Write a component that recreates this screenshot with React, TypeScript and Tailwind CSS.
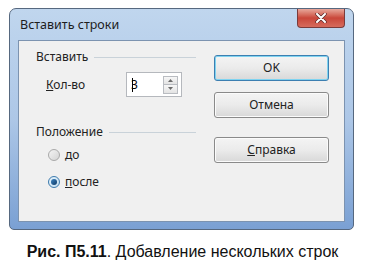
import React from "react";

const font = { fontFamily: '"Noto Sans", "Open Sans", sans-serif' };

const Radio = ({ checked }: { checked?: boolean }) => (
  <span
    className={
      "flex h-[12px] w-[12px] items-center justify-center rounded-full border " +
      (checked
        ? "border-[#3d7bad] bg-gradient-to-br from-[#e6f3fb] to-[#c4dff2]"
        : "border-[#a9a9a9] bg-gradient-to-br from-[#f4f4f4] to-[#d4d4d4]")
    }
  >
    {checked && (
      <span className="h-[6px] w-[6px] rounded-full bg-gradient-to-br from-[#3f86c3] to-[#0e3a66]" />
    )}
  </span>
);

const Button = ({
  children,
  primary,
}: {
  children: React.ReactNode;
  primary?: boolean;
}) => (
  <div
    className={
      "flex h-[26px] w-[115px] items-center justify-center rounded-[3px] border bg-gradient-to-b from-[#f4f4f4] via-[#ebebeb] to-[#d8d8d8] text-[12px] text-[#222] " +
      (primary
        ? "border-[#3c7fb1] shadow-[inset_0_0_0_1px_#7fd3f0]"
        : "border-[#8a8a8a] shadow-[inset_0_0_0_1px_#fbfbfb]")
    }
  >
    {children}
  </div>
);

const Header = ({ label }: { label: string }) => (
  <div className="flex h-[16px] items-center">
    <span className="text-[12px] text-[#222]">{label}</span>
    <span className="ml-[6px] h-px flex-1 bg-[#c9d2d9]" />
  </div>
);

export default function App() {
  return (
    <div className="h-[270px] w-[365px] overflow-hidden bg-white" style={font}>
      <div className="ml-[9px] mt-[8px] flex h-[222px] w-[345px] flex-col rounded-t-[7px] rounded-b-[5px] border border-[#56687f] bg-gradient-to-b from-[#c0d6ee] via-[#adc7e7] to-[#7aa0d3]">
        <div className="flex h-[31px] items-start justify-between pl-[10px] pr-[8px]">
          <span className="mt-[7px] text-[12.5px] text-[#1d1d1d]">Вставить строки</span>
          <div className="flex h-[19px] w-[48px] items-center justify-center rounded-b-[4px] border border-t-0 border-[#7a3b3b] bg-gradient-to-b from-[#e6a79c] via-[#c9463a] to-[#d66b5d]">
            <svg width="12" height="10" viewBox="0 0 12 10">
              <path d="M2 1 L10 9 M10 1 L2 9" stroke="#5a2a2a" strokeWidth="3.4" strokeLinecap="round" />
              <path d="M2 1 L10 9 M10 1 L2 9" stroke="#fff" strokeWidth="2" strokeLinecap="round" />
            </svg>
          </div>
        </div>
        <div className="mx-[8px] mb-[7px] flex flex-1 border border-[#7c93b0] bg-[#f0f0f0]">
          <div className="w-[177px] pl-[17px] pt-[8px]">
            <Header label="Вставить" />
            <div className="mt-[7px] flex h-[25px] items-center">
              <span className="w-[90px] pl-[10px] text-[12px] text-[#222]">
                <span className="underline">К</span>ол-во
              </span>
              <div className="flex h-[25px] w-[56px] items-center border border-[#b5b8bd] bg-white">
                <span className="relative ml-[4px] text-[12px] text-black">
                  3
                  <span className="absolute left-[1px] top-[2px] h-[14px] w-px bg-black" />
                </span>
                <div className="ml-auto mr-[3px] flex flex-col">
                  <div className="flex h-[9px] w-[15px] items-center justify-center border border-[#b9bcc1] bg-gradient-to-b from-[#f7f7f7] to-[#e3e3e3]">
                    <svg width="5" height="3" viewBox="0 0 5 3"><path d="M0 3 L2.5 0 L5 3 Z" fill="#6b6b6b" /></svg>
                  </div>
                  <div className="flex h-[9px] w-[15px] items-center justify-center border border-t-0 border-[#b9bcc1] bg-gradient-to-b from-[#f7f7f7] to-[#e3e3e3]">
                    <svg width="5" height="3" viewBox="0 0 5 3"><path d="M0 0 L2.5 3 L5 0 Z" fill="#6b6b6b" /></svg>
                  </div>
                </div>
              </div>
            </div>
            <div className="mt-[27px]">
              <Header label="Положение" />
            </div>
            <div className="mt-[7px] flex h-[16px] items-center pl-[12px]">
              <Radio />
              <span className="ml-[5px] text-[12px] text-[#222]">
                <span className="underline">д</span>о
              </span>
            </div>
            <div className="mt-[11px] flex h-[16px] items-center pl-[12px]">
              <Radio checked />
              <span className="ml-[5px] text-[12px] text-[#222]">
                <span className="underline">п</span>осле
              </span>
            </div>
          </div>
          <div className="ml-[18px] flex flex-col pt-[14px]">
            <Button primary>OK</Button>
            <div className="mt-[11px]">
              <Button>Отмена</Button>
            </div>
            <div className="mt-[19px]">
              <Button>
                <span>
                  <span className="underline">С</span>правка
                </span>
              </Button>
            </div>
          </div>
        </div>
      </div>
      <div
        className="mt-[12px] text-center text-[16px] leading-[20px] text-[#111]"
        style={{ fontFamily: '"Liberation Sans", Arial, sans-serif' }}
      >
        <span className="font-bold">Рис. П5.11</span>. Добавление нескольких строк
      </div>
    </div>
  );
}
